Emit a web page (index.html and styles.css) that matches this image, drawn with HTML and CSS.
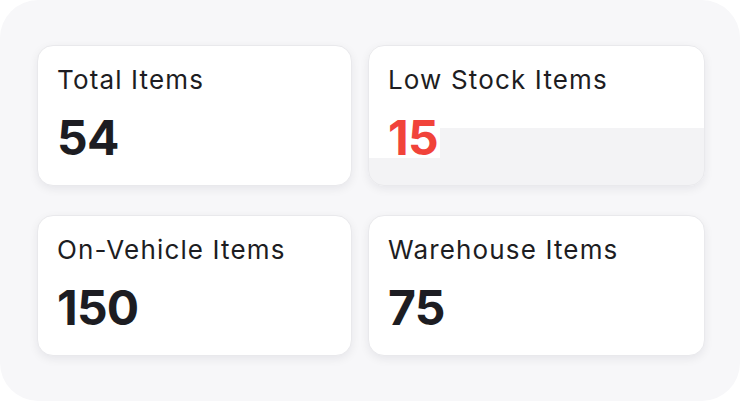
FILE: index.html
```html
<!DOCTYPE html>
<html lang="en">
<head>
<meta charset="utf-8">
<title>Inventory summary</title>
<link rel="stylesheet" href="styles.css">
</head>
<body>
<main class="panel">
  <section class="stat-grid">
    <div class="card">
      <div class="label">Total Items</div>
      <div class="value">54</div>
    </div>
    <div class="card card-alert">
      <div class="label">Low Stock Items</div>
      <div class="value value-alert">15</div>
    </div>
    <div class="card">
      <div class="label">On-Vehicle Items</div>
      <div class="value">150</div>
    </div>
    <div class="card">
      <div class="label">Warehouse Items</div>
      <div class="value">75</div>
    </div>
  </section>
</main>
</body>
</html>
```

FILE: styles.css
```css
html, body {
  margin: 0;
  padding: 0;
  background: #ffffff;
}

body {
  font-family: "Inter", "Liberation Sans", sans-serif;
  color: #1d1d22;
}

.panel {
  width: 740px;
  height: 401px;
  box-sizing: border-box;
  background: #f7f7f9;
  border-radius: 38px;
  padding: 45px 35px 45px 37px;
}

.stat-grid {
  display: grid;
  grid-template-columns: 315px 337px;
  grid-template-rows: 141px 141px;
  column-gap: 16px;
  row-gap: 29px;
}

.card {
  box-sizing: border-box;
  background: #ffffff;
  border: 1px solid #e9e9ec;
  border-radius: 16px;
  box-shadow: 0 3px 10px rgba(20, 20, 40, 0.07);
  padding: 18px 19px 0 19px;
  overflow: hidden;
}

.card-alert {
  background: linear-gradient(#ffffff 82px, #f3f3f5 82px);
}

.label {
  font-size: 26px;
  line-height: 32px;
  font-weight: 400;
  letter-spacing: 1.15px;
}

.value {
  margin-top: 22px;
  font-size: 48px;
  line-height: 40px;
  font-weight: 700;
  letter-spacing: -0.8px;
}

.value-alert {
  display: inline-block;
  color: #f1433a;
  background: #ffffff;
  margin-left: -19px;
  padding-left: 19px;
  padding-right: 2px;
}
```
